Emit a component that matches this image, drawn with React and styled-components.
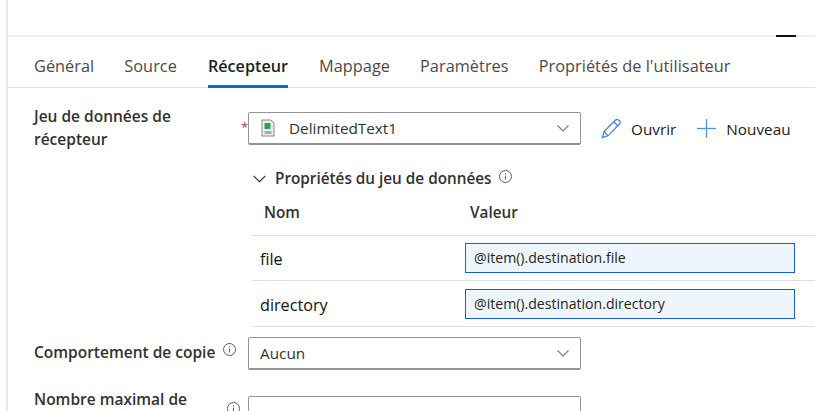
import { createGlobalStyle } from "styled-components";
import styled from "styled-components";

const GlobalStyle = createGlobalStyle`
  html, body {
    margin: 0;
    padding: 0;
    height: 100%;
    overflow: hidden;
    background: #fff;
  }
  body {
    font-family: "Open Sans", "Noto Sans", "Liberation Sans", sans-serif;
    color: #323130;
  }
`;

const Page = styled.div`
  position: relative;
  width: 815px;
  height: 411px;
  overflow: hidden;
  box-sizing: border-box;
  margin-left: 6px;
  border-left: 2px solid #e6e6e6;
`;

const TopBar = styled.div`
  height: 35px;
  border-bottom: 2px solid #ececec;
`;

const Dash = styled.span`
  position: absolute;
  top: 35px;
  left: 768px;
  width: 20px;
  height: 2px;
  background: #111;
`;

const Tabs = styled.div`
  display: flex;
  gap: 30px;
  height: 51px;
  box-sizing: border-box;
  padding-left: 26px;
  border-bottom: 1px solid #e1e1e1;
`;

const Tab = styled.div`
  box-sizing: border-box;
  height: 51px;
  padding-top: 18px;
  margin: ${(p) => (p.$active ? "0 1px" : "0")};
  font-size: ${(p) => (p.$active ? "16.2px" : "16.3px")};
  letter-spacing: ${(p) => (p.$active ? "0" : "0.05px")};
  line-height: 22px;
  font-weight: ${(p) => (p.$active ? 600 : 400)};
  color: ${(p) => (p.$active ? "#201f1e" : "#4a4a48")};
  border-bottom: ${(p) => (p.$active ? "3px solid #0f6cbd" : "none")};
`;

const Form = styled.div`
  padding: 24px 0 0 26px;
`;

const Row = styled.div`
  display: grid;
  grid-template-columns: 214px 333px 1fr;
  align-items: start;
  margin-top: ${(p) => p.$top || 0}px;
`;

const Label = styled.div`
  position: relative;
  font-size: 15.5px;
  line-height: 23px;
  font-weight: 600;
  color: #323130;
  margin-top: ${(p) => p.$top || 0}px;
`;

const Required = styled.span`
  position: absolute;
  top: 14px;
  right: 0;
  font-size: 13px;
  line-height: 16px;
  color: #b5577c;
`;

const LabelInfo = styled.span`
  position: absolute;
  top: 10px;
  right: 7px;
`;

const Select = styled.div`
  display: flex;
  align-items: center;
  box-sizing: border-box;
  height: ${(p) => p.$height || 33}px;
  padding: 0 10px 0 11px;
  border: 1px solid #979593;
  border-bottom-width: 2px;
  border-radius: 2px;
  font-size: 15.3px;
  color: #323130;
`;

const SelectText = styled.span`
  flex: 1;
  margin-left: ${(p) => p.$left || 0}px;
`;

const Actions = styled.div`
  display: flex;
  align-items: center;
  height: 33px;
  padding-left: 20px;
`;

const Action = styled.div`
  display: flex;
  align-items: center;
  gap: 9px;
  font-size: 15.3px;
  color: #1b1a19;
  margin-right: 20px;
`;

const Props = styled.div`
  margin-left: 218px;
`;

const PropsHeading = styled.div`
  display: flex;
  align-items: center;
  height: 22px;
  margin-top: 16px;
  font-size: 15.3px;
  font-weight: 600;
  color: #323130;
`;

const HeadingText = styled.span`
  margin-left: 8px;
`;

const InfoIcon = styled.svg`
  width: 15px;
  height: 15px;
  margin-left: ${(p) => p.$left || 0}px;
  margin-top: ${(p) => p.$lift || -4}px;
  flex: none;
  vertical-align: middle;
`;

const Table = styled.div`
  margin-top: 12px;
`;

const HeaderRow = styled.div`
  display: grid;
  grid-template-columns: 206px 1fr;
  height: 35px;
  box-sizing: border-box;
  padding-left: 12px;
  font-size: 15.3px;
  line-height: 22px;
  font-weight: 600;
  border-bottom: 1px solid #dcdcdc;
`;

const DataRow = styled.div`
  display: grid;
  grid-template-columns: 205px 330px;
  align-items: center;
  box-sizing: border-box;
  height: ${(p) => p.$height}px;
  padding-left: 8px;
  font-size: 16.2px;
  color: #111;
  border-bottom: 1px solid #dcdcdc;
`;

const Name = styled.span`
  padding-top: 2px;
`;

const ValueInput = styled.div`
  box-sizing: border-box;
  height: 30px;
  padding-left: 8px;
  font-size: 14.1px;
  line-height: 28px;
  color: #252423;
  background: #eef5fd;
  border: 1px solid #0f62d6;
`;

const Chevron = ({ size = 14, color = "#7a7a78" }) => (
  <svg width={size} height={size} viewBox="0 0 14 14" fill="none" stroke={color} strokeWidth="1.1">
    <path d="M1.5 4.5 7 10l5.5-5.5" />
  </svg>
);

const Info = ({ left, lift }) => (
  <InfoIcon $left={left} $lift={lift} viewBox="0 0 15 15" fill="none" stroke="#605e5c">
    <circle cx="7.5" cy="7.5" r="6" />
    <path d="M7.5 6.6v4" />
    <path d="M7.5 4.2v1.2" />
  </InfoIcon>
);

const FileIcon = () => (
  <svg width="16" height="18" viewBox="0 0 16 18">
    <path d="M2 1h9l3 3v13H2z" fill="#eceeec" stroke="#858c89" />
    <rect x="4.5" y="4" width="6" height="6" fill="#2f9e5b" />
    <rect x="4.5" y="12" width="7" height="3" fill="#a4aaa7" />
  </svg>
);

const PencilIcon = () => (
  <svg width="21" height="21" viewBox="0 0 21 21" fill="none" stroke="#3f7fd6" strokeWidth="1.2">
    <path d="M1.5 19.5 3 13.5 14.5 2a2.2 2.2 0 0 1 3 0l1 1a2.2 2.2 0 0 1 0 3L7 17.8z" />
    <path d="M3 13.5 7 17.8" />
    <path d="M13 4l4 4" />
  </svg>
);

const PlusIcon = () => (
  <svg width="21" height="21" viewBox="0 0 21 21" fill="none" stroke="#4b97e0" strokeWidth="1.3">
    <path d="M10.5 1v19" />
    <path d="M1 10.5h19" />
  </svg>
);

const TABS = ["Général", "Source", "Récepteur", "Mappage", "Paramètres", "Propriétés de l'utilisateur"];

export default function App() {
  return (
    <Page>
      <GlobalStyle />
      <TopBar />
      <Dash />
      <Tabs>
        {TABS.map((tab) => (
          <Tab key={tab} $active={tab === "Récepteur"}>
            {tab}
          </Tab>
        ))}
      </Tabs>
      <Form>
        <Row>
          <Label $top={-7}>
            Jeu de données de
            <br />
            récepteur
            <Required>*</Required>
          </Label>
          <Select>
            <FileIcon />
            <SelectText $left={13}>DelimitedText1</SelectText>
            <Chevron />
          </Select>
          <Actions>
            <Action>
              <PencilIcon />
              Ouvrir
            </Action>
            <Action>
              <PlusIcon />
              Nouveau
            </Action>
          </Actions>
        </Row>
        <Props>
          <PropsHeading>
            <Chevron size={15} color="#323130" />
            <HeadingText>Propriétés du jeu de données</HeadingText>
            <Info left={6} />
          </PropsHeading>
          <Table>
            <HeaderRow>
              <span>Nom</span>
              <span>Valeur</span>
            </HeaderRow>
            <DataRow $height={45}>
              <Name>file</Name>
              <ValueInput>@item().destination.file</ValueInput>
            </DataRow>
            <DataRow $height={46}>
              <Name>directory</Name>
              <ValueInput>@item().destination.directory</ValueInput>
            </DataRow>
          </Table>
        </Props>
        <Row $top={10}>
          <Label $top={4}>
            Comportement de copie <Info left={3} lift={-9} />
          </Label>
          <Select>
            <SelectText>Aucun</SelectText>
            <Chevron />
          </Select>
        </Row>
        <Row $top={26}>
          <Label $top={-8}>
            Nombre maximal de
            <LabelInfo>
              <Info left={0} />
            </LabelInfo>
          </Label>
          <Select />
        </Row>
      </Form>
    </Page>
  );
}
